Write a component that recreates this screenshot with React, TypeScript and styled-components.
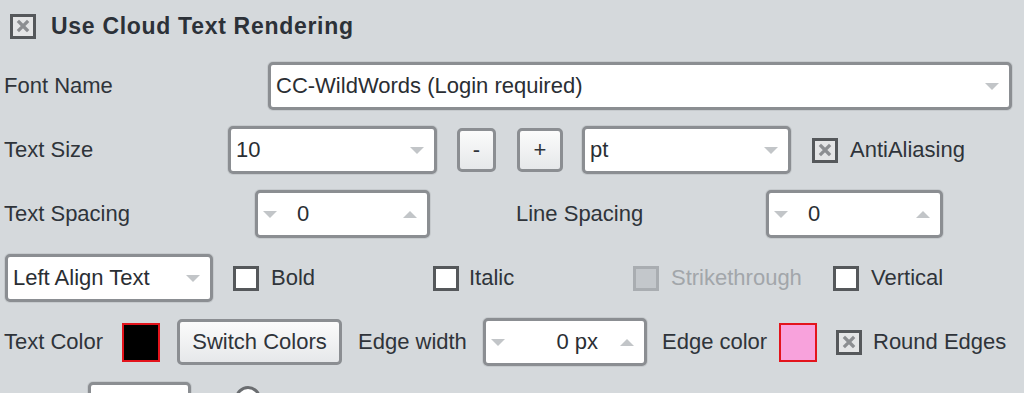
import React from 'react'
import styled, { createGlobalStyle } from 'styled-components'

const GlobalStyle = createGlobalStyle`
  html, body {
    margin: 0;
    padding: 0;
    background: #d5d9dc;
    overflow: hidden;
  }
  body {
    font-family: "Liberation Sans", Arial, sans-serif;
  }
`

const Panel = styled.div`
  width: 1024px;
  height: 393px;
  overflow: hidden;
  box-sizing: border-box;
  padding: 6px 12px 0 4px;
  display: flex;
  flex-direction: column;
  gap: 16px;
  color: #2f343a;
  font-size: 22px;
`

const Row = styled.div<{ $h?: number }>`
  display: flex;
  align-items: center;
  flex-shrink: 0;
  height: ${p => p.$h ?? 48}px;
`

const Label = styled.span<{ $w?: number; $ml?: number }>`
  flex-shrink: 0;
  white-space: nowrap;
  ${p => p.$w && `width: ${p.$w}px;`}
  margin-left: ${p => p.$ml ?? 0}px;
`

const Title = styled.span`
  margin-left: 15px;
  font-size: 23px;
  font-weight: bold;
  letter-spacing: 0.7px;
  color: #2c3138;
`

const Field = styled.div<{ $w: number; $ml?: number; $flex?: boolean }>`
  flex-shrink: 0;
  ${p => p.$flex ? 'flex: 1;' : `width: ${p.$w}px;`}
  margin-left: ${p => p.$ml ?? 0}px;
  height: 48px;
  box-sizing: border-box;
  border: 3px solid #8b8e92;
  border-radius: 5px;
  background: #fff;
  display: flex;
  align-items: center;
  padding: 0 10px 0 5px;
  box-shadow: 0 0 0 1px #c6cacd;
`

const FieldText = styled.span<{ $right?: boolean }>`
  flex: 1;
  white-space: nowrap;
  color: #2a2e33;
  ${p => p.$right && 'text-align: right; padding-right: 22px;'}
`

const Arrow = styled.span<{ $up?: boolean }>`
  width: 0;
  height: 0;
  flex-shrink: 0;
  border-left: 7px solid transparent;
  border-right: 7px solid transparent;
  ${p => p.$up
    ? 'border-bottom: 7px solid #c2c5c8;'
    : 'border-top: 7px solid #c2c5c8;'}
`

const SpinNumber = styled.span`
  margin-left: 20px;
  flex: 1;
  color: #2a2e33;
`

const PushButton = styled.div<{ $w: number; $ml?: number; $h?: number }>`
  flex-shrink: 0;
  width: ${p => p.$w}px;
  height: ${p => p.$h ?? 44}px;
  margin-left: ${p => p.$ml ?? 0}px;
  box-sizing: border-box;
  border: 3px solid #8b8e92;
  border-radius: 5px;
  background: linear-gradient(#fbfbfb, #e6e8ea);
  display: flex;
  align-items: center;
  justify-content: center;
  color: #2f343a;
  white-space: nowrap;
`

const Box = styled.span<{ $ml?: number; $disabled?: boolean }>`
  flex-shrink: 0;
  width: 26px;
  height: 25px;
  margin-left: ${p => p.$ml ?? 0}px;
  box-sizing: border-box;
  border: 3px solid ${p => p.$disabled ? '#a9adb1' : '#55585b'};
  background: ${p => p.$disabled ? '#c3c7cb' : '#fff'};
  display: flex;
  align-items: center;
  justify-content: center;
`

const CheckedBox = styled(Box)`
  background: #e4e5e6;
`

const CheckItem = styled.div<{ $w?: number; $ml?: number; $gap?: number }>`
  flex-shrink: 0;
  display: flex;
  align-items: center;
  gap: ${p => p.$gap ?? 12}px;
  ${p => p.$w && `width: ${p.$w}px;`}
  margin-left: ${p => p.$ml ?? 0}px;
`

const CheckText = styled.span<{ $muted?: boolean }>`
  white-space: nowrap;
  color: ${p => p.$muted ? '#a2a6aa' : '#2f343a'};
`

const Swatch = styled.span<{ $color: string; $ml?: number }>`
  flex-shrink: 0;
  width: 38px;
  height: 39px;
  margin-left: ${p => p.$ml ?? 0}px;
  box-sizing: border-box;
  border: 2px solid #e3141c;
  background: ${p => p.$color};
`

const Dial = styled.span`
  flex-shrink: 0;
  align-self: flex-start;
  margin: 4px 0 0 44px;
  width: 26px;
  height: 26px;
  box-sizing: border-box;
  border: 3px solid #6a6d70;
  border-radius: 50%;
  background: #fff;
`

const Cross = () => (
  <svg width="14" height="14" viewBox="0 0 14 14">
    <path d="M3 3 L11 11 M11 3 L3 11" stroke="#8c8e91" strokeWidth="3.2" strokeLinecap="square" />
  </svg>
)

const Check = ({ checked, disabled, label, w, ml, gap }: any) => (
  <CheckItem $w={w} $ml={ml} $gap={gap}>
    {checked ? <CheckedBox><Cross /></CheckedBox> : <Box $disabled={disabled} />}
    <CheckText $muted={disabled}>{label}</CheckText>
  </CheckItem>
)

const Combo = ({ text, w, ml, flex }: any) => (
  <Field $w={w} $ml={ml} $flex={flex}>
    <FieldText>{text}</FieldText>
    <Arrow />
  </Field>
)

const Spin = ({ value, w, ml, right }: any) => (
  <Field $w={w} $ml={ml}>
    <Arrow />
    {right ? <FieldText $right>{value}</FieldText> : <SpinNumber>{value}</SpinNumber>}
    <Arrow $up />
  </Field>
)

export default function App() {
  return (
    <>
      <GlobalStyle />
      <Panel>
        <Row $h={40}>
          <CheckedBox $ml={6}><Cross /></CheckedBox>
          <Title>Use Cloud Text Rendering</Title>
        </Row>

        <Row>
          <Label $w={264}>Font Name</Label>
          <Combo flex text="CC-WildWords (Login required)" />
        </Row>

        <Row>
          <Label $w={224}>Text Size</Label>
          <Combo w={209} text="10" />
          <PushButton $w={39} $ml={20}>-</PushButton>
          <PushButton $w={46} $ml={21}>+</PushButton>
          <Combo w={209} ml={19} text="pt" />
          <Check checked label="AntiAliasing" ml={21} />
        </Row>

        <Row>
          <Label $w={251}>Text Spacing</Label>
          <Spin w={175} value="0" />
          <Label $w={250} $ml={86}>Line Spacing</Label>
          <Spin w={177} value="0" />
        </Row>

        <Row>
          <Combo w={208} ml={1} text="Left Align Text" />
          <Check label="Bold" w={200} ml={20} />
          <Check label="Italic" w={200} gap={10} />
          <Check label="Strikethrough" w={200} disabled />
          <Check label="Vertical" />
        </Row>

        <Row>
          <Label $w={118}>Text Color</Label>
          <Swatch $color="#000" />
          <PushButton $w={165} $ml={17} $h={46}>Switch Colors</PushButton>
          <Label $w={125} $ml={16}>Edge width</Label>
          <Spin w={164} value="0 px" right />
          <Label $w={117} $ml={15}>Edge color</Label>
          <Swatch $color="#f8a2dc" />
          <Check checked label="Round Edges" ml={19} gap={11} />
        </Row>

        <Row>
          <Label $w={84} />
          <Field $w={103} />
          <Dial />
        </Row>
      </Panel>
    </>
  )
}
